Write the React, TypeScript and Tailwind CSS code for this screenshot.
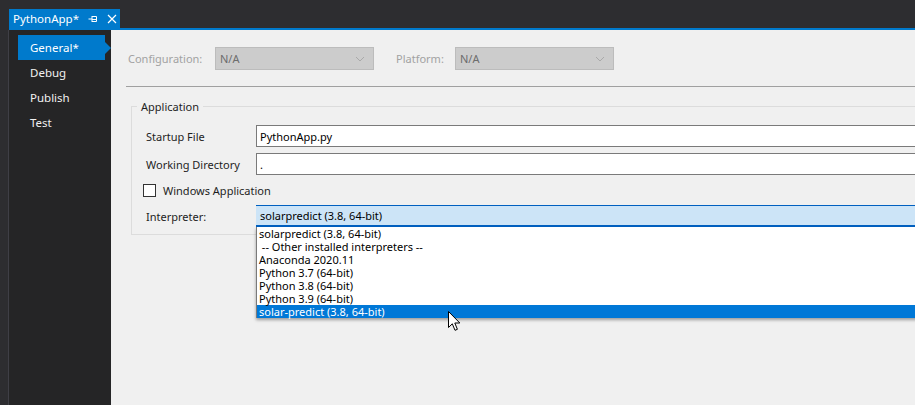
const NAV = ["General*", "Debug", "Publish", "Test"];

const INTERPRETERS = [
  "solarpredict (3.8, 64-bit)",
  " -- Other installed interpreters --",
  "Anaconda 2020.11",
  "Python 3.7 (64-bit)",
  "Python 3.8 (64-bit)",
  "Python 3.9 (64-bit)",
  "solar-predict (3.8, 64-bit)",
];

function Chevron() {
  return (
    <svg width="10" height="6" viewBox="0 0 10 6" className="text-[#a9a9a9]">
      <path d="M1 1 L5 5 L9 1" fill="none" stroke="currentColor" strokeWidth="1" />
    </svg>
  );
}

function DisabledSelect() {
  return (
    <div className="flex h-[23px] w-[159px] shrink-0 items-center justify-between border border-[#bcbcbc] bg-[#cccccc] pl-[4px] pr-[8px] text-[#6d6d6d]">
      <span>N/A</span>
      <Chevron />
    </div>
  );
}

function Field({ label, value }: { label: string; value: string }) {
  return (
    <div className="flex h-[22px] items-center">
      <span className="w-[124px] shrink-0 whitespace-nowrap pl-[14px] text-[#1e1e1e]">{label}</span>
      <div className="flex h-[22px] flex-1 items-center border border-[#7a7a7a] bg-white pl-[3px] text-black">
        {value}
      </div>
    </div>
  );
}

function Cursor() {
  return (
    <svg width="13" height="21" viewBox="0 0 13 21" className="absolute left-[337px] top-[281px]">
      <path
        d="M0.5 0.5 L0.5 16.5 L4.3 12.8 L7 19.3 L9.4 18.3 L6.8 12 L11.8 12 Z"
        fill="white"
        stroke="black"
        strokeWidth="1"
        strokeLinejoin="round"
      />
    </svg>
  );
}

export default function App() {
  return (
    <div className="flex h-[405px] w-[915px] flex-col overflow-hidden bg-[#2d2d30] pl-[8px] font-['Segoe_UI','Noto_Sans',sans-serif] text-[11px] leading-none">
      {/* document tab */}
      <div className="flex h-[28px] items-end pl-px">
        <div className="flex h-[19px] w-[111px] items-center bg-[#007acc] pl-[4px] text-[11.5px] text-white">
          <span>PythonApp*</span>
          <svg width="10" height="10" viewBox="0 0 10 10" className="ml-[9px]">
            <path d="M0.5 5 H4 M4 2 V8 M4 2.5 H8.5 V7.5 H4 M4 5.5 H8.5" fill="none" stroke="white" strokeWidth="1" />
          </svg>
          <svg width="10" height="10" viewBox="0 0 10 10" className="ml-[9px]">
            <path d="M1 1 L9 9 M9 1 L1 9" stroke="white" strokeWidth="1.2" />
          </svg>
        </div>
      </div>
      <div className="ml-px h-[2px] bg-[#007acc]" />

      <div className="flex flex-1">
        {/* side nav */}
        <div className="w-[103px] shrink-0 border-l border-[#3f3f46] bg-[#252526] pl-[9px] pt-[5px] text-[11.5px]">
          {NAV.map((n, i) =>
            i === 0 ? (
              <div key={n} className="relative flex h-[25px] w-[87px] items-center bg-[#007acc] pl-[12px] text-white">
                {n}
                <span className="absolute right-[-6px] top-[7px] h-0 w-0 border-y-[6px] border-l-[6px] border-y-transparent border-l-[#007acc]" />
              </div>
            ) : (
              <div key={n} className="flex h-[25px] items-center pl-[12px] text-[#f1f1f1]">
                {n}
              </div>
            )
          )}
        </div>

        {/* property page */}
        <div className="relative min-w-0 flex-1 overflow-hidden bg-[#f0f0f0]">
          <div className="flex items-center pl-[17px] pt-[17px]">
            <span className="w-[87px] shrink-0 text-[#a2a2a2]">Configuration:</span>
            <DisabledSelect />
            <span className="ml-[22px] w-[59px] shrink-0 text-[#a2a2a2]">Platform:</span>
            <DisabledSelect />
          </div>
          <div className="ml-[15px] mt-[16px] h-px bg-[#a0a0a0]" />

          <fieldset className="ml-[20px] mt-[14px] h-[134px] w-[820px] border border-[#dcdcdc] pt-[13px]">
            <legend className="ml-[5px] px-[4px] text-[#1e1e1e]">Application</legend>
            <div className="flex flex-col gap-[6px]">
              <Field label="Startup File" value="PythonApp.py" />
              <Field label="Working Directory" value="." />
            </div>
            <label className="mt-[9px] flex h-[13px] items-center pl-[11px] text-[#1e1e1e]">
              <span className="h-[13px] w-[13px] border border-[#333333] bg-white" />
              <span className="ml-[7px]">Windows Application</span>
            </label>
            <div className="mt-[8px] flex h-[22px] items-center">
              <span className="w-[124px] shrink-0 pl-[14px] text-[#1e1e1e]">Interpreter:</span>
              <div className="flex h-[22px] flex-1 items-center border-t border-b-2 border-[#0060c0] bg-[#cce4f7] pl-[4px] text-black">
                solarpredict (3.8, 64-bit)
              </div>
            </div>
          </fieldset>

          {/* open interpreter list */}
          <div className="absolute left-[145px] top-[197px] w-[700px] border-l border-[#7a7a7a] bg-white shadow-[0_2px_3px_rgba(0,0,0,0.35)]">
            {INTERPRETERS.map((t, i) => (
              <div
                key={i}
                className={
                  i === INTERPRETERS.length - 1
                    ? "flex h-[13px] items-center whitespace-pre bg-[#0078d7] pl-[2px] text-white"
                    : "flex h-[13px] items-center whitespace-pre pl-[2px] text-black"
                }
              >
                {t}
              </div>
            ))}
          </div>
          <Cursor />
        </div>
      </div>
    </div>
  );
}
